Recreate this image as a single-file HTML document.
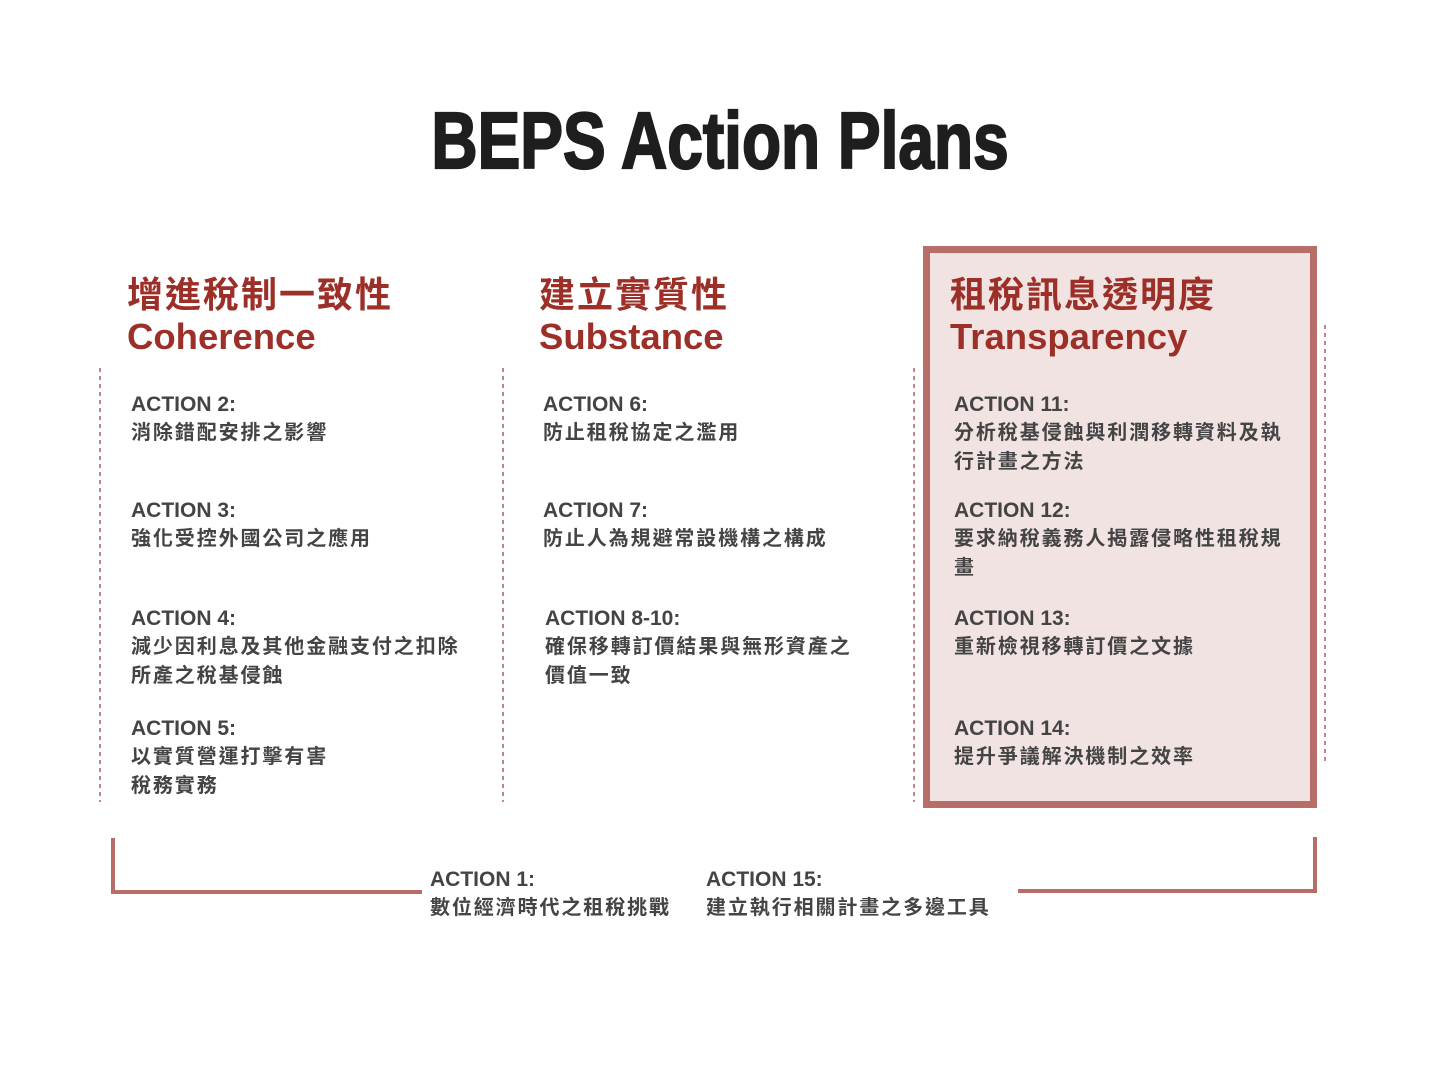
<!DOCTYPE html>
<html><head><meta charset="utf-8"><style>
html,body{margin:0;padding:0;background:#fff;}
body{width:1440px;height:1080px;position:relative;overflow:hidden;font-family:"Liberation Sans","Noto Sans CJK TC",sans-serif;}
.a{position:absolute;}
.title{left:720px;top:96px;font-size:80px;font-weight:bold;color:#1e1e1e;white-space:nowrap;transform:translateX(-50%) scaleX(0.80);transform-origin:center;line-height:90px;-webkit-text-stroke:2.2px #1e1e1e;}
.h{color:#9c2f27;font-weight:bold;white-space:nowrap;}
.hz{font-size:36px;letter-spacing:2px;line-height:44px;}
.he{font-size:36.5px;line-height:40px;}
.it{color:#444;font-weight:bold;white-space:nowrap;}
.it .n{font-size:21px;line-height:29px;}
.it .c{font-size:20px;letter-spacing:1.9px;line-height:29px;}
.dot{position:absolute;width:2px;background:repeating-linear-gradient(to bottom,#c4848a 0 4px,transparent 4px 8px);}
.box{left:923px;top:246px;width:380px;height:548px;border:7px solid #b86e68;background:#f1e3e2;}
.ln{position:absolute;background:#b86e68;}
</style></head><body>
<div class="a title">BEPS Action Plans</div>

<div class="a box"></div>

<div class="dot" style="left:99px;top:368px;height:434px"></div>
<div class="dot" style="left:502px;top:368px;height:434px"></div>
<div class="dot" style="left:913px;top:368px;height:434px"></div>
<div class="dot" style="left:1324px;top:325px;height:436px"></div>

<div class="a h" style="left:127px;top:273px"><div class="hz">增進稅制一致性</div><div class="he">Coherence</div></div>
<div class="a h" style="left:539px;top:273px"><div class="hz">建立實質性</div><div class="he">Substance</div></div>
<div class="a h" style="left:950px;top:273px"><div class="hz">租稅訊息透明度</div><div class="he">Transparency</div></div>

<div class="a it" style="left:131px;top:390px"><div class="n">ACTION 2:</div><div class="c">消除錯配安排之影響</div></div>
<div class="a it" style="left:131px;top:496px"><div class="n">ACTION 3:</div><div class="c">強化受控外國公司之應用</div></div>
<div class="a it" style="left:131px;top:604px"><div class="n">ACTION 4:</div><div class="c">減少因利息及其他金融支付之扣除<br>所產之稅基侵蝕</div></div>
<div class="a it" style="left:131px;top:714px"><div class="n">ACTION 5:</div><div class="c">以實質營運打擊有害<br>稅務實務</div></div>

<div class="a it" style="left:543px;top:390px"><div class="n">ACTION 6:</div><div class="c">防止租稅協定之濫用</div></div>
<div class="a it" style="left:543px;top:496px"><div class="n">ACTION 7:</div><div class="c">防止人為規避常設機構之構成</div></div>
<div class="a it" style="left:545px;top:604px"><div class="n">ACTION 8-10:</div><div class="c">確保移轉訂價結果與無形資產之<br>價值一致</div></div>

<div class="a it" style="left:954px;top:390px"><div class="n">ACTION 11:</div><div class="c">分析稅基侵蝕與利潤移轉資料及執<br>行計畫之方法</div></div>
<div class="a it" style="left:954px;top:496px"><div class="n">ACTION 12:</div><div class="c">要求納稅義務人揭露侵略性租稅規<br>畫</div></div>
<div class="a it" style="left:954px;top:604px"><div class="n">ACTION 13:</div><div class="c">重新檢視移轉訂價之文據</div></div>
<div class="a it" style="left:954px;top:714px"><div class="n">ACTION 14:</div><div class="c">提升爭議解決機制之效率</div></div>

<div class="ln" style="left:111px;top:838px;width:4px;height:56px"></div>
<div class="ln" style="left:111px;top:890px;width:311px;height:4px"></div>
<div class="ln" style="left:1018px;top:889px;width:299px;height:4px"></div>
<div class="ln" style="left:1313px;top:837px;width:4px;height:56px"></div>

<div class="a it" style="left:430px;top:865px"><div class="n">ACTION 1:</div><div class="c">數位經濟時代之租稅挑戰</div></div>
<div class="a it" style="left:706px;top:865px"><div class="n">ACTION 15:</div><div class="c">建立執行相關計畫之多邊工具</div></div>
</body></html>
